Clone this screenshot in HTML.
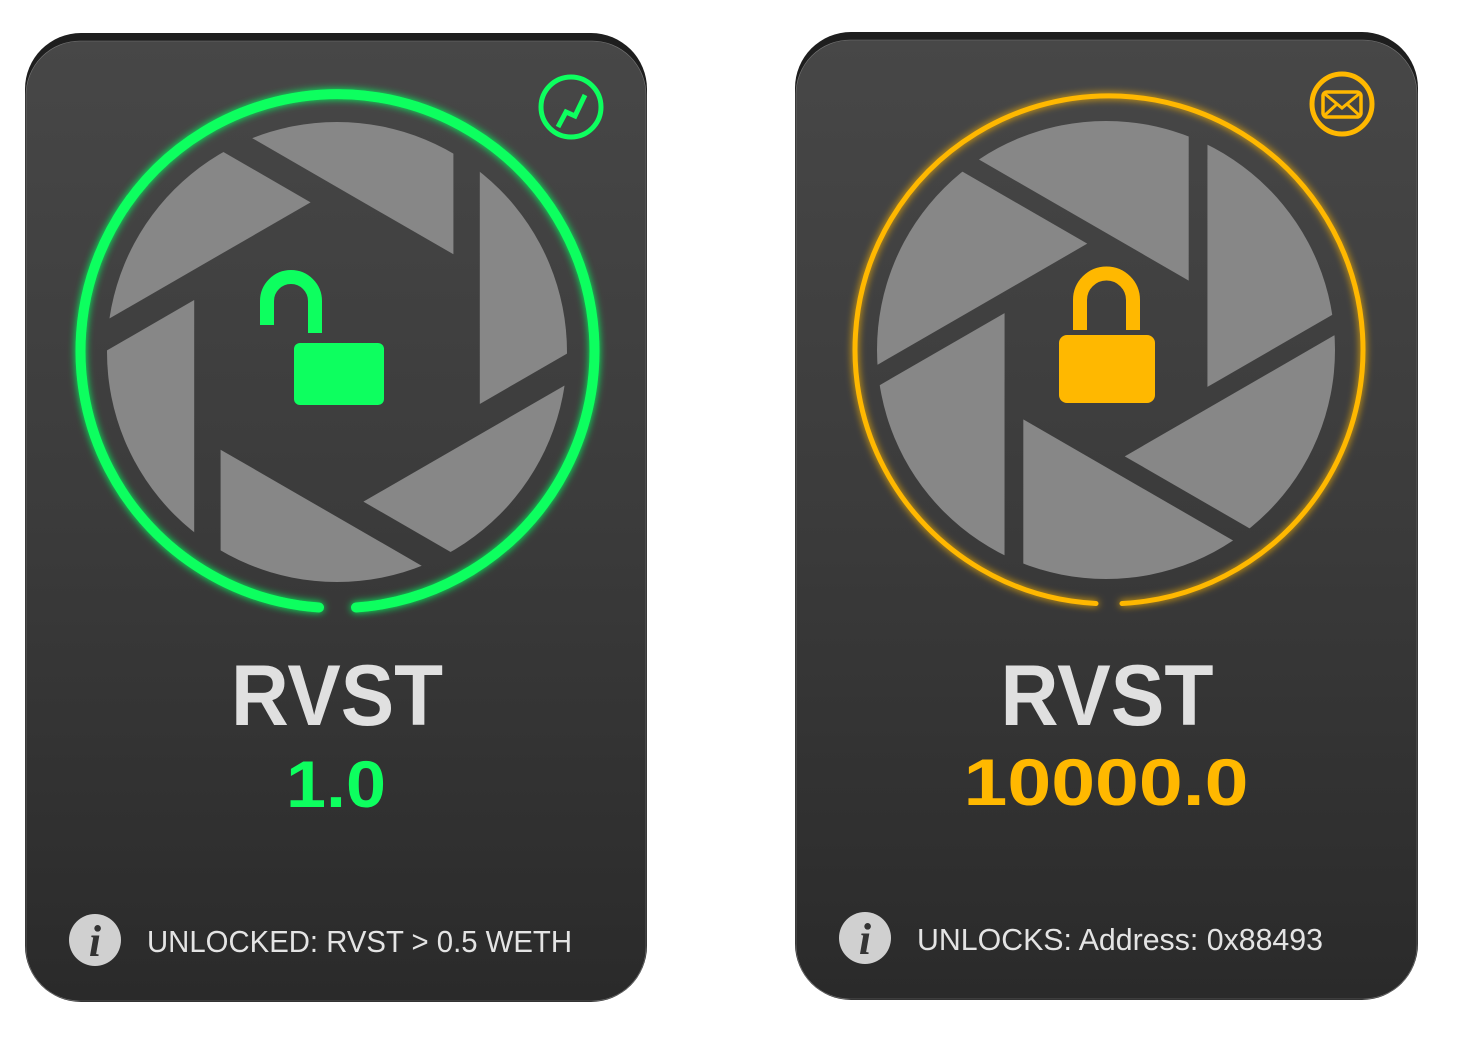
<!DOCTYPE html>
<html><head><meta charset="utf-8"><style>
html,body{margin:0;padding:0;background:#fff;overflow:hidden;width:1458px;height:1037px;}
svg{display:block;}
text{font-family:"Liberation Sans",sans-serif;}
</style></head><body>
<svg width="1458" height="1037" viewBox="0 0 1458 1037" xmlns="http://www.w3.org/2000/svg">
<defs>
<linearGradient id="cg" x1="0" y1="0" x2="0" y2="1">
<stop offset="0" stop-color="#474747"/><stop offset="0.5" stop-color="#3b3b3b"/><stop offset="1" stop-color="#2a2a2a"/>
</linearGradient>
<filter id="glow" x="-20%" y="-20%" width="140%" height="140%">
<feGaussianBlur in="SourceGraphic" stdDeviation="4" result="b"/>
<feMerge><feMergeNode in="b"/><feMergeNode in="SourceGraphic"/></feMerge>
</filter>
<clipPath id="d1"><circle cx="0" cy="0" r="230"/></clipPath>
<clipPath id="d2"><circle cx="0" cy="0" r="229"/></clipPath>
</defs>

<!-- Card 1 -->
<rect x="25" y="33" width="622" height="969" rx="56" fill="#1e1e1e"/>
<rect x="26" y="41" width="620" height="960" rx="54" fill="url(#cg)" stroke="#777" stroke-width="0.6"/>
<g transform="translate(337,352)">
<g clip-path="url(#d1)">
<g fill="#878787">
<polygon points="116.4,-97.7 116.4,-797.7 -489.8,-447.7"/>
<polygon points="116.4,-97.7 116.4,-797.7 -489.8,-447.7" transform="rotate(60)"/>
<polygon points="116.4,-97.7 116.4,-797.7 -489.8,-447.7" transform="rotate(120)"/>
<polygon points="116.4,-97.7 116.4,-797.7 -489.8,-447.7" transform="rotate(180)"/>
<polygon points="116.4,-97.7 116.4,-797.7 -489.8,-447.7" transform="rotate(240)"/>
<polygon points="116.4,-97.7 116.4,-797.7 -489.8,-447.7" transform="rotate(300)"/>
</g></g></g>
<path d="M356 607.5 A257 257 0 1 0 319 607.5" fill="none" stroke="#0dff5f" stroke-width="10" stroke-linecap="round" filter="url(#glow)"/>
<path d="M267 325 V301 A24 24 0 0 1 315 301 V333" fill="none" stroke="#0dff5f" stroke-width="14"/>
<rect x="294" y="343" width="90" height="62" rx="6" fill="#0dff5f"/>
<circle cx="571" cy="107" r="30" fill="none" stroke="#0dff5f" stroke-width="5"/>
<path d="M558 127 L566 112 L575 116 L585 95" fill="none" stroke="#0dff5f" stroke-width="5"/>
<text x="337" y="725" text-anchor="middle" font-size="86" font-weight="bold" fill="#e0e0e0" textLength="212" lengthAdjust="spacingAndGlyphs">RVST</text>
<text x="336" y="807" text-anchor="middle" font-size="66" font-weight="bold" fill="#0dff5f" textLength="100" lengthAdjust="spacingAndGlyphs">1.0</text>
<circle cx="95" cy="940" r="26" fill="#d0d0d0"/>
<text x="95" y="956" text-anchor="middle" font-style="italic" font-weight="bold" font-size="44" fill="#333" style="font-family:'Liberation Serif',serif">i</text>
<text x="147" y="952" font-size="31" fill="#e4e4e4" textLength="425" lengthAdjust="spacingAndGlyphs">UNLOCKED: RVST &gt; 0.5 WETH</text>

<!-- Card 2 -->
<rect x="795" y="32" width="623" height="968" rx="56" fill="#1e1e1e"/>
<rect x="796" y="40" width="621" height="959" rx="54" fill="url(#cg)" stroke="#777" stroke-width="0.6"/>
<g transform="translate(1106,350)">
<g clip-path="url(#d2)">
<g fill="#878787">
<polygon points="82.7,-69.4 82.7,-769.4 -523.5,-419.4"/>
<polygon points="82.7,-69.4 82.7,-769.4 -523.5,-419.4" transform="rotate(60)"/>
<polygon points="82.7,-69.4 82.7,-769.4 -523.5,-419.4" transform="rotate(120)"/>
<polygon points="82.7,-69.4 82.7,-769.4 -523.5,-419.4" transform="rotate(180)"/>
<polygon points="82.7,-69.4 82.7,-769.4 -523.5,-419.4" transform="rotate(240)"/>
<polygon points="82.7,-69.4 82.7,-769.4 -523.5,-419.4" transform="rotate(300)"/>
</g></g></g>
<path d="M1122 603.5 A254 254 0 1 0 1096 603.5" fill="none" stroke="#ffb800" stroke-width="5" stroke-linecap="round" filter="url(#glow)"/>
<path d="M1080 330 V300 A26.5 26.5 0 0 1 1133 300 V330" fill="none" stroke="#ffb800" stroke-width="14"/>
<rect x="1059" y="335" width="96" height="68" rx="8" fill="#ffb800"/>
<circle cx="1342" cy="104" r="30" fill="none" stroke="#ffb800" stroke-width="5"/>
<rect x="1323" y="92" width="38" height="25" rx="4" fill="none" stroke="#ffb800" stroke-width="3.5"/>
<path d="M1325 94 L1342 108 L1359 94 M1325 115 L1337 104 M1359 115 L1347 104" fill="none" stroke="#ffb800" stroke-width="3"/>
<text x="1107" y="725" text-anchor="middle" font-size="86" font-weight="bold" fill="#e0e0e0" textLength="213" lengthAdjust="spacingAndGlyphs">RVST</text>
<text x="1106" y="805" text-anchor="middle" font-size="66" font-weight="bold" fill="#ffb800" textLength="285" lengthAdjust="spacingAndGlyphs">10000.0</text>
<circle cx="865" cy="938" r="26" fill="#d0d0d0"/>
<text x="865" y="954" text-anchor="middle" font-style="italic" font-weight="bold" font-size="44" fill="#333" style="font-family:'Liberation Serif',serif">i</text>
<text x="917" y="950" font-size="31" fill="#e4e4e4" textLength="406" lengthAdjust="spacingAndGlyphs">UNLOCKS: Address: 0x88493</text>
</svg>
</body></html>
